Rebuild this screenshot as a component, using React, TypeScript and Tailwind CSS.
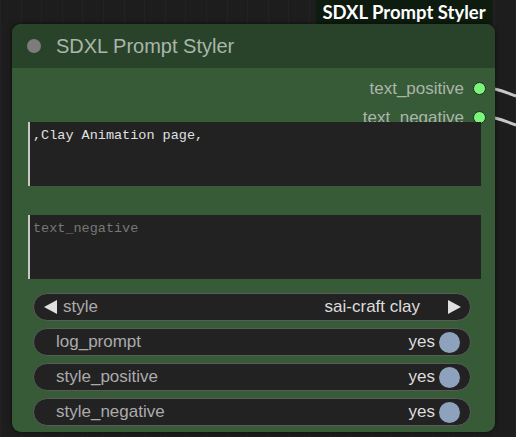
import React from "react";

const sans = { fontFamily: '"Liberation Sans", Arial, sans-serif' };

function Toggle({ label }: { label: string }) {
  return (
    <div className="h-[28px] ml-[21px] mr-[24px] rounded-full bg-[#222222] border border-[#5a5a5a] flex items-center pl-[22px] pr-[10px] text-[17px]">
      <span className="text-[#ababab] flex-1">{label}</span>
      <span className="text-[#dddddd]">yes</span>
      <span className="ml-[4px] w-[21px] h-[21px] rounded-full bg-[#8fa2bd]" />
    </div>
  );
}

export default function App() {
  return (
    <div
      className="relative w-[516px] h-[437px] overflow-hidden bg-[#1d1d1d]"
      style={sans}
    >
      {/* faint canvas lines */}
      <div className="absolute inset-0 flex justify-between opacity-60">
        {Array.from({ length: 26 }).map((_, i) => (
          <div key={i} className="w-px h-full bg-[#262626]" />
        ))}
      </div>

      {/* wires */}
      <svg className="absolute left-0 top-0" width="516" height="437">
        <path d="M486 88 C 498 88, 504 92, 516 96" stroke="#c9c9c9" strokeWidth="3" fill="none" />
        <path d="M486 117 C 498 117, 504 121, 516 125" stroke="#c9c9c9" strokeWidth="3" fill="none" />
      </svg>

      {/* tooltip title */}
      <div
        className="absolute left-[316px] top-0 w-[176px] h-[24px] bg-[#0e1b0f] flex items-center justify-center text-white text-[18.5px] font-bold leading-none"
        style={{ fontFamily: 'Lato, "Open Sans", sans-serif' }}
      >
        SDXL Prompt Styler
      </div>

      {/* node */}
      <div className="absolute left-[12px] top-[24px] w-[483px] h-[408px] rounded-[9px] overflow-hidden bg-[#375b37] shadow-[0_0_4px_rgba(0,0,0,0.6)] flex flex-col">
        <div className="h-[44px] bg-[#29422a] flex items-center shrink-0">
          <span className="ml-[15px] w-[14px] h-[14px] rounded-full bg-[#7c7c7c]" />
          <span className="ml-[15px] text-[20px] text-[#a9b6a9]">SDXL Prompt Styler</span>
        </div>

        <div className="flex flex-col pt-[6px]">
          <div className="h-[29px] flex items-center justify-end pr-[9px] text-[17px] text-[#abb5ab]">
            <span>text_positive</span>
            <span className="ml-[9px] w-[13px] h-[13px] rounded-full bg-[#7cf47c] border border-[#1c2e1c]" />
          </div>
          <div className="h-[29px] flex items-center justify-end pr-[9px] text-[17px] text-[#abb5ab]">
            <span>text_negative</span>
            <span className="ml-[9px] w-[13px] h-[13px] rounded-full bg-[#7cf47c] border border-[#1c2e1c]" />
          </div>

          <div
            className="relative mt-[-10px] ml-[16px] mr-[14px] h-[64px] bg-[#222222] border-l-2 border-[#c8c8c8] pl-[3px] pt-[6px] text-[13.5px] leading-[16px] text-[#e0e0e0]"
            style={{ fontFamily: '"Liberation Mono", "DejaVu Sans Mono", monospace' }}
          >
            ,Clay Animation page,
          </div>

          <div
            className="mt-[29px] ml-[16px] mr-[14px] h-[64px] bg-[#222222] border-l-2 border-[#c8c8c8] pl-[3px] pt-[6px] text-[13.5px] leading-[16px] text-[#777777]"
            style={{ fontFamily: '"Liberation Mono", "DejaVu Sans Mono", monospace' }}
          >
            text_negative
          </div>

          <div className="mt-[14px] flex flex-col gap-[7px]">
            <div className="h-[28px] ml-[21px] mr-[24px] rounded-full bg-[#222222] border border-[#5a5a5a] flex items-center pl-[10px] pr-[9px] text-[17px]">
              <svg width="13" height="14" viewBox="0 0 13 14">
                <polygon points="0,7 13,0 13,14" fill="#e0e0e0" />
              </svg>
              <span className="ml-[6px] text-[#ababab] flex-1">style</span>
              <span className="text-[#dddddd]">sai-craft clay</span>
              <svg className="ml-[28px]" width="13" height="14" viewBox="0 0 13 14">
                <polygon points="13,7 0,0 0,14" fill="#e0e0e0" />
              </svg>
            </div>
            <Toggle label="log_prompt" />
            <Toggle label="style_positive" />
            <Toggle label="style_negative" />
          </div>
        </div>
      </div>
    </div>
  );
}
